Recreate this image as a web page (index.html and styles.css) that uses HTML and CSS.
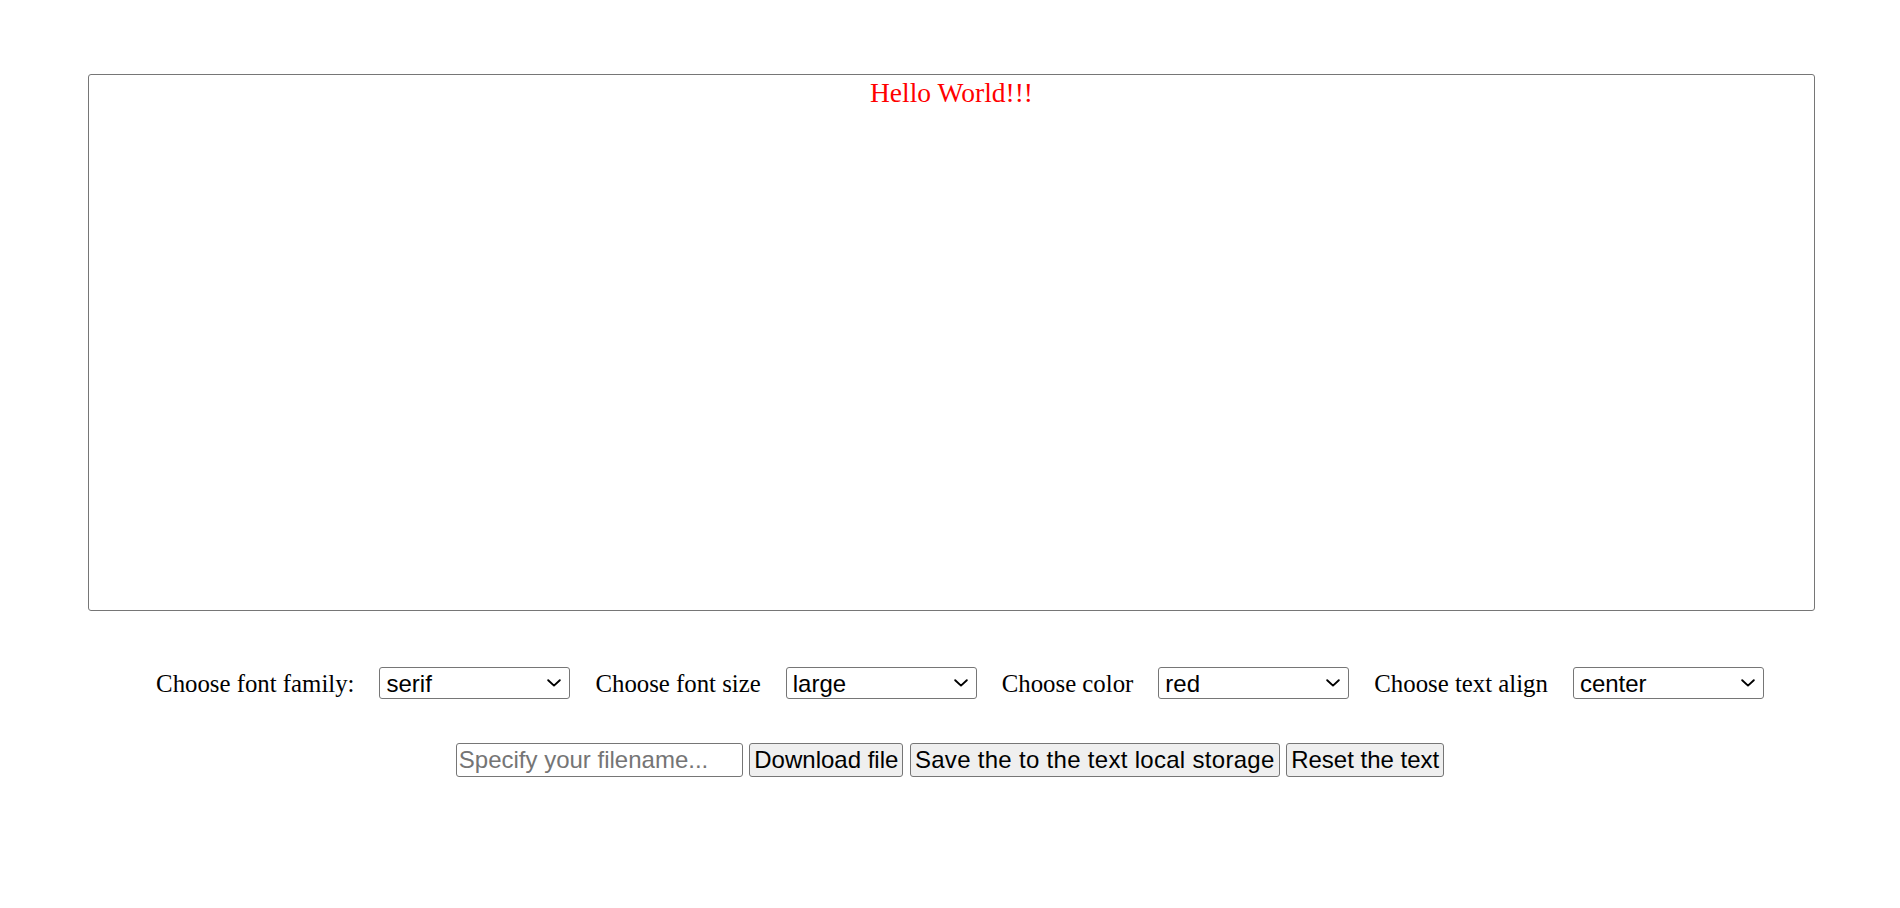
FILE: index.html
```html
<!DOCTYPE html>
<html lang="en">
<head>
<meta charset="utf-8">
<title>Text editor</title>
<link rel="stylesheet" href="styles.css">
</head>
<body>
<main class="page">
  <div class="editor-wrap">
    <textarea class="editor">Hello World!!!</textarea>
  </div>
  <div class="controls">
    <label class="ctl-label" for="ff">Choose font family:</label>
    <select class="ctl-select" id="ff"><option>serif</option><option>sans-serif</option><option>monospace</option></select>
    <label class="ctl-label" for="fs">Choose font size</label>
    <select class="ctl-select" id="fs"><option>large</option><option>medium</option><option>small</option></select>
    <label class="ctl-label" for="fc">Choose color</label>
    <select class="ctl-select" id="fc"><option>red</option><option>black</option><option>blue</option></select>
    <label class="ctl-label" for="ta">Choose text align</label>
    <select class="ctl-select" id="ta"><option>center</option><option>left</option><option>right</option></select>
  </div>
  <div class="actions">
    <input class="filename" type="text" placeholder="Specify your filename...">
    <button class="btn" type="button">Download file</button>
    <button class="btn btn-wide" type="button">Save the to the text local storage</button>
    <button class="btn" type="button">Reset the text</button>
  </div>
</main>
</body>
</html>
```
FILE: styles.css
```css
html, body {
  margin: 0;
  padding: 0;
  background: #ffffff;
}
.page {
  font-family: "Liberation Serif", "Times New Roman", serif;
  font-size: 24px;
  color: #000;
  padding-top: 74px;
}
.editor-wrap {
  display: flex;
  padding: 0 85px 0 88px;
}
.editor {
  box-sizing: border-box;
  width: 1727px;
  height: 537px;
  margin: 0;
  border: 1px solid #767676;
  border-radius: 3px;
  padding: 2px 3px;
  font-family: "Liberation Serif", "Times New Roman", serif;
  font-size: 27.5px;
  line-height: normal;
  color: #ff0000;
  text-align: center;
  resize: none;
  outline: none;
  background: #fff;
}
.controls {
  display: flex;
  align-items: baseline;
  justify-content: center;
  gap: 25px;
  margin-top: 56px;
  padding-left: 20px;
}
.ctl-label {
  font-family: "Liberation Serif", "Times New Roman", serif;
  font-size: 24.8px;
  color: #000;
}
.ctl-select {
  box-sizing: border-box;
  width: 191px;
  height: 32px;
  margin: 0;
  padding: 0 30px 0 6px;
  border: 1px solid #767676;
  border-radius: 3px;
  font-family: "Liberation Sans", Arial, sans-serif;
  font-size: 24px;
  color: #000;
  -webkit-appearance: none;
  appearance: none;
  background-color: #fff;
  background-image: url("data:image/svg+xml;utf8,<svg xmlns='http://www.w3.org/2000/svg' width='14' height='8' viewBox='0 0 14 8'><path d='M1.2 1.2 L7 6.6 L12.8 1.2' fill='none' stroke='%23000' stroke-width='1.9' stroke-linecap='round' stroke-linejoin='round'/></svg>");
  background-repeat: no-repeat;
  background-position: right 8px center;
  background-size: 14px 8px;
}
.actions {
  display: flex;
  align-items: center;
  justify-content: center;
  gap: 6.5px;
  margin-top: 44px;
  padding-right: 0;
}
.filename {
  box-sizing: border-box;
  width: 287px;
  height: 34px;
  margin: 0;
  padding: 1px 2px;
  border: 1px solid #767676;
  border-radius: 3px;
  font-family: "Liberation Sans", Arial, sans-serif;
  font-size: 24px;
  color: #000;
  background: #fff;
  outline: none;
}
.filename::placeholder {
  color: #757575;
}
.btn {
  box-sizing: border-box;
  height: 34px;
  margin: 0;
  padding: 0 4px;
  border: 1px solid #767676;
  border-radius: 3px;
  background: #efefef;
  font-family: "Liberation Sans", Arial, sans-serif;
  font-size: 24px;
  color: #000;
  line-height: 1;
}
.btn-wide {
  letter-spacing: 0.3px;
}
```
